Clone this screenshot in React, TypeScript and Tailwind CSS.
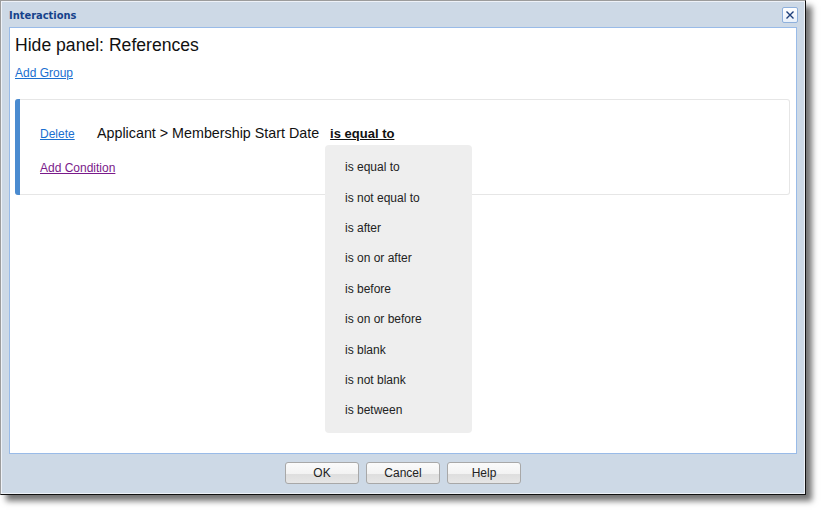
import React from "react";

const options = [
  "is equal to",
  "is not equal to",
  "is after",
  "is on or after",
  "is before",
  "is on or before",
  "is blank",
  "is not blank",
  "is between",
];

function Btn({ label }: { label: string }) {
  return (
    <button className="w-[74px] h-[22px] rounded-[3px] border border-[#a8a8a8] bg-[linear-gradient(#fbfbfb_0%,#f2f2f2_55%,#dedede_56%,#e6e6e6_100%)] text-[12px] text-[#222] leading-none font-['Liberation_Sans',Arial,sans-serif]">
      {label}
    </button>
  );
}

export default function App() {
  return (
    <div className="w-[821px] h-[510px] bg-white font-['Liberation_Sans',Arial,sans-serif]">
      <div className="w-[806px] h-[495px] border border-t-[#9c9c9c] border-l-[#9c9c9c] border-r-[#111] border-b-[#111] shadow-[6px_6px_6px_rgba(0,0,0,0.55)] bg-[#cdd9e6]">
        <div className="w-full h-full border border-[#eef2f8] flex flex-col">
          {/* Title bar */}
          <div className="h-[25px] flex items-start justify-between pl-[7px] pr-[6px] shrink-0">
            <span className="mt-[7px] leading-[14px] text-[11px] font-bold text-[#15428b] font-['DejaVu_Sans_Condensed','Liberation_Sans',sans-serif]">Interactions</span>
            <div className="mt-[5px] w-[16px] h-[16px] rounded-[2px] border border-[#8eb0dc] bg-[linear-gradient(#ffffff,#e8f0fa)] flex items-center justify-center">
              <svg width="10" height="10" viewBox="0 0 10 10">
                <path d="M1.5 1.5 L8.5 8.5 M8.5 1.5 L1.5 8.5" stroke="#1e3f7a" strokeWidth="1.4" />
              </svg>
            </div>
          </div>
          {/* Content */}
          <div className="mx-[7px] h-[427px] bg-white border border-[#99bbe8] pl-[5px] pr-[6px] pt-[6px] shrink-0">
            <div className="text-[17.6px] text-[#111] leading-[22px]">Hide panel: References</div>
            <div className="mt-[9px] leading-[14px]">
              <a className="text-[12px] text-[#1a6fd0] underline cursor-pointer">Add Group</a>
            </div>
            <div className="relative mt-[19px] h-[96px] border border-[#e6e6e6] border-l-0 rounded-[3px] flex">
              <div className="w-[5px] h-[96px] -mt-px bg-[#4a8bd0] rounded-l-[3px] shrink-0" />
              <div className="pl-[20px] pt-[25px] flex flex-col">
                <div className="flex items-center h-[18px]">
                  <a className="text-[12px] text-[#1a6fd0] underline cursor-pointer w-[57px]">Delete</a>
                  <span className="text-[14.3px] text-[#111]">Applicant &gt; Membership Start Date</span>
                  <span className="ml-[11px] text-[13px] font-bold text-[#111] underline">is equal to</span>
                </div>
                <div className="mt-[17px] h-[16px] flex items-center">
                  <a className="text-[12px] text-[#7a1a8a] underline cursor-pointer">Add Condition</a>
                </div>
              </div>
              <div className="absolute left-[310px] top-[45px] w-[147px] bg-[#eeeeee] rounded-[4px] py-[7px] z-10">
                {options.map((o) => (
                  <div key={o} className="h-[30.4px] flex items-center pl-[20px] text-[12px] text-[#222]">
                    {o}
                  </div>
                ))}
              </div>
            </div>
          </div>
          {/* Footer */}
          <div className="flex-1 flex items-center justify-center gap-[7px] pb-[1px]">
            <Btn label="OK" />
            <Btn label="Cancel" />
            <Btn label="Help" />
          </div>
        </div>
      </div>
    </div>
  );
}
